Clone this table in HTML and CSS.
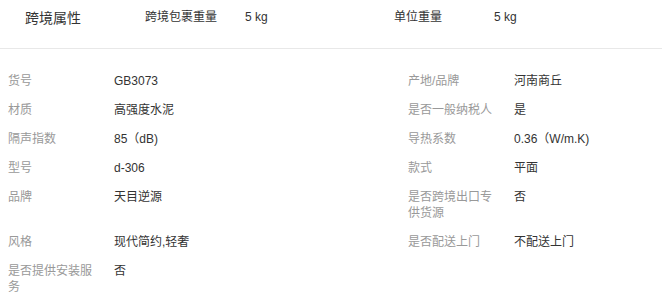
FILE: index.html
```html
<!DOCTYPE html>
<html lang="zh-CN">
<head>
    <meta charset="UTF-8">
    <meta name="viewport" content="width=device-width, initial-scale=1.0">
    <title>商品属性</title>
    <link rel="stylesheet" href="styles.css">
</head>
<body>

    <!-- Cross-border summary -->
    <div class="attr-head">
        <h3 class="attr-title">跨境属性</h3>
        <div class="head-pair">
            <span class="head-label">跨境包裹重量</span>
            <span class="head-value">5 kg</span>
        </div>
        <div class="head-pair">
            <span class="head-label">单位重量</span>
            <span class="head-value">5 kg</span>
        </div>
    </div>

    <!-- Attribute list, two per row -->
    <ul class="attr-list">
        <li class="attr-item"><span class="attr-label">货号</span><span class="attr-value">GB3073</span></li>
        <li class="attr-item"><span class="attr-label">产地/品牌</span><span class="attr-value">河南商丘</span></li>
        <li class="attr-item"><span class="attr-label">材质</span><span class="attr-value">高强度水泥</span></li>
        <li class="attr-item"><span class="attr-label">是否一般纳税人</span><span class="attr-value">是</span></li>
        <li class="attr-item"><span class="attr-label">隔声指数</span><span class="attr-value">85（dB)</span></li>
        <li class="attr-item"><span class="attr-label">导热系数</span><span class="attr-value">0.36（W/m.K)</span></li>
        <li class="attr-item"><span class="attr-label">型号</span><span class="attr-value">d-306</span></li>
        <li class="attr-item"><span class="attr-label">款式</span><span class="attr-value">平面</span></li>
        <li class="attr-item"><span class="attr-label">品牌</span><span class="attr-value">天目逆源</span></li>
        <li class="attr-item"><span class="attr-label">是否跨境出口专供货源</span><span class="attr-value">否</span></li>
        <li class="attr-item"><span class="attr-label">风格</span><span class="attr-value">现代简约,轻奢</span></li>
        <li class="attr-item"><span class="attr-label">是否配送上门</span><span class="attr-value">不配送上门</span></li>
        <li class="attr-item"><span class="attr-label">是否提供安装服务</span><span class="attr-value">否</span></li>
    </ul>

</body>
</html>
```

FILE: styles.css
```css
/* General Styling */
body {
    font-family: "Liberation Sans", "Noto Sans CJK SC", sans-serif;
    margin: 0;
    padding: 0;
    background: #fff;
    color: #333;
    font-size: 12px;
    overflow: hidden;
}

/* Header row */
.attr-head {
    display: flex;
    align-items: center;
    height: 49px;
    padding-left: 25px;
    padding-bottom: 15px;
    border-bottom: 1px solid #e8e8e8;
    box-sizing: border-box;
}

.attr-title {
    width: 120px;
    margin: 0;
    font-size: 14px;
    font-weight: normal;
    color: #333;
}

.head-pair {
    display: flex;
    line-height: 16px;
}

.head-label {
    width: 100px;
    color: #333;
}

.head-value {
    width: 149px;
    color: #333;
}

/* Attribute list */
.attr-list {
    list-style: none;
    margin: 0;
    padding: 24px 0 0 8px;
    display: grid;
    grid-template-columns: 400px 1fr;
    row-gap: 13px;
}

.attr-item {
    display: flex;
    line-height: 16px;
}

.attr-label {
    width: 90px;
    margin-right: 16px;
    color: #999;
    flex-shrink: 0;
}

.attr-value {
    color: #333;
}
```
